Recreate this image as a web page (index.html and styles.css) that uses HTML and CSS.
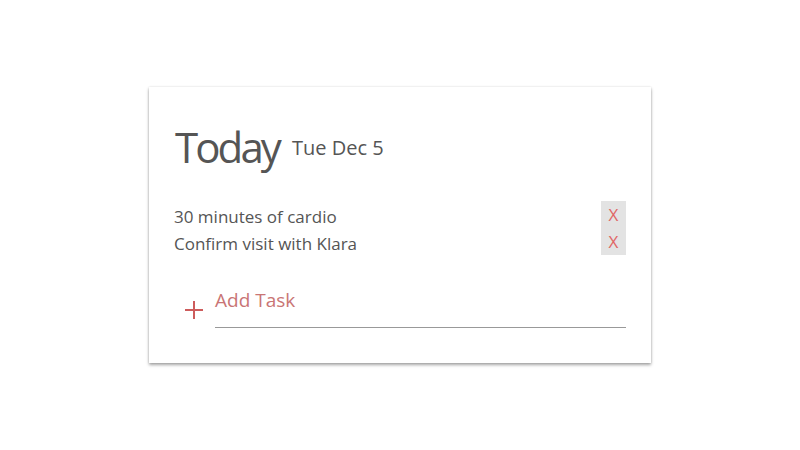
FILE: index.html
```html
<!DOCTYPE html>
<html>
<head>
<meta charset="utf-8">
<link rel="stylesheet" href="styles.css">
</head>
<body>
<div class="card">
  <div class="header">
    <span class="title">Today</span>
    <span class="date">Tue Dec 5</span>
  </div>
  <ul class="tasks">
    <li class="task"><span class="task-text">30 minutes of cardio</span><button class="remove">X</button></li>
    <li class="task"><span class="task-text">Confirm visit with Klara</span><button class="remove">X</button></li>
  </ul>
  <div class="add-row">
    <span class="plus"><svg width="20" height="20" viewBox="0 0 20 20"><path d="M10 1v18M1 10h18" stroke="#cd5c5c" stroke-width="2" fill="none"/></svg></span>
    <div class="add-field">Add Task</div>
  </div>
</div>
</body>
</html>
```
FILE: styles.css
```css
html, body {
  margin: 0;
  padding: 0;
  background: #fff;
}
body {
  font-family: "Open Sans", "Noto Sans", sans-serif;
  color: #555;
  min-height: 450px;
  padding-top: 87px;
  box-sizing: border-box;
}
.card {
  width: 502px;
  height: 276px;
  box-sizing: border-box;
  margin: 0 auto;
  padding: 26px 25px 0 26px;
  background: #fff;
  box-shadow: 0 2px 3px rgba(0,0,0,0.35), 0 0 2px rgba(0,0,0,0.12);
}
.header {
  display: flex;
  align-items: center;
  gap: 13px;
  height: 68px;
}
.title {
  font-size: 42px;
  font-weight: 400;
  letter-spacing: -2.9px;
  color: #555;
  line-height: 1;
}
.date {
  font-size: 20px;
  color: #555;
  line-height: 1;
  padding-top: 2px;
}
.tasks {
  list-style: none;
  margin: 20px 0 0;
  padding: 0;
}
.task {
  display: flex;
  align-items: center;
  justify-content: space-between;
  height: 27px;
  font-size: 17px;
}
.task-text {
  padding-top: 3px;
  margin-left: -1px;
}
.remove {
  width: 25px;
  height: 27px;
  border: 0;
  margin: 0;
  padding: 0;
  background: #e3e3e3;
  color: #e06666;
  font-family: "Open Sans", sans-serif;
  font-size: 17px;
  line-height: 27px;
}
.add-row {
  display: flex;
  align-items: flex-end;
  margin-top: 32px;
}
.plus {
  width: 40px;
  display: flex;
  justify-content: center;
  padding-bottom: 8px;
  padding-right: 2px;
  box-sizing: border-box;
}
.add-field {
  flex: 1;
  font-size: 19px;
  color: #c97575;
  border-bottom: 1px solid #999;
  padding-bottom: 14px;
  line-height: 26px;
}
```
